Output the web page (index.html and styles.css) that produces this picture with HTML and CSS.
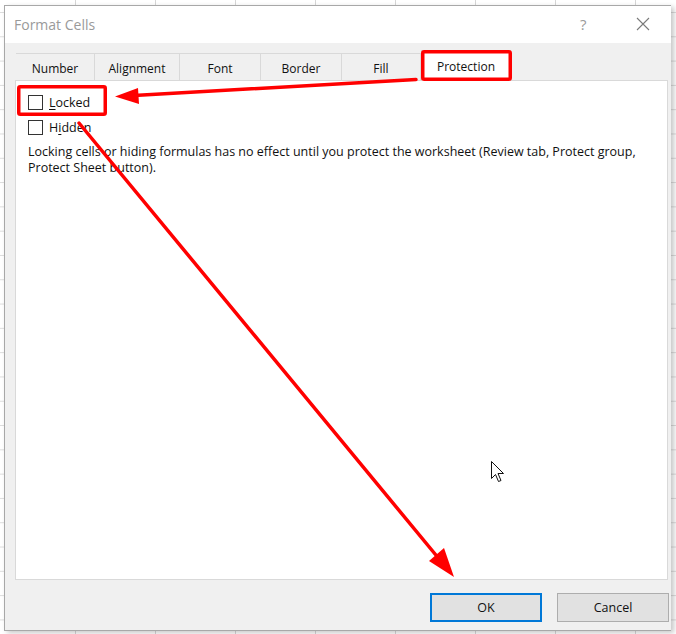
FILE: index.html
```html
<!DOCTYPE html>
<html>
<head>
<meta charset="utf-8">
<title>Format Cells</title>
<link rel="stylesheet" href="styles.css">
</head>
<body>
<div class="dialog">
  <div class="titlebar">
    <span class="title">Format Cells</span>
    <span class="help">?</span>
    <span class="close">
      <svg width="14" height="14" viewBox="0 0 14 14"><path d="M1 1 L13 13 M13 1 L1 13" stroke="#7a7a7a" stroke-width="1.1" fill="none"/></svg>
    </span>
  </div>
  <div class="body">
    <div class="tabs">
      <div class="tab">Number</div>
      <div class="tab">Alignment</div>
      <div class="tab">Font</div>
      <div class="tab">Border</div>
      <div class="tab">Fill</div>
      <div class="tab active">Protection</div>
    </div>
    <div class="panel">
      <label class="check"><span class="box"></span><span><u>L</u>ocked</span></label>
      <label class="check"><span class="box"></span><span>H<u>i</u>dden</span></label>
      <p class="note">Locking cells or hiding formulas has no effect until you protect the worksheet (Review tab, Protect group, Protect Sheet button).</p>
    </div>
    <div class="buttons">
      <button class="btn btn-default">OK</button>
      <button class="btn">Cancel</button>
    </div>
  </div>
</div>

<svg class="annot" width="676" height="634" viewBox="0 0 676 634">
  <rect x="422.75" y="51.75" width="87.5" height="27.5" rx="1.5" fill="none" stroke="#f00" stroke-width="3.5"/>
  <rect x="18.75" y="86.75" width="86.5" height="27.5" rx="1.5" fill="none" stroke="#f00" stroke-width="3.5"/>
  <line x1="416" y1="79.5" x2="134" y2="95.5" stroke="#f00" stroke-width="3.5" stroke-linecap="round"/>
  <polygon points="115,96.5 138,88 139,104" fill="#f00"/>
  <line x1="79" y1="123" x2="440" y2="560" stroke="#f00" stroke-width="3.5" stroke-linecap="round"/>
  <polygon points="454,577 429,561 444,548" fill="#f00"/>
  <path d="M491.5 461.5 L491.5 478.5 L495.5 474.5 L498.5 481.5 L501 480.5 L498 473.5 L503.5 473.5 Z" fill="#fff" stroke="#111" stroke-width="1" stroke-linejoin="miter"/>
</svg>
</body>
</html>
```

FILE: styles.css
```css
* { box-sizing: border-box; }

html, body {
  margin: 0;
  padding: 0;
}

body {
  width: 676px;
  height: 634px;
  overflow: hidden;
  position: relative;
  background-color: #ffffff;
  background-image:
    linear-gradient(to right, #d6d6d6 1px, transparent 1px),
    linear-gradient(to bottom, #dcdcdc 1px, transparent 1px);
  background-size: 80px 100%, 100% 24.3px;
  background-position: 75px 0, 0 12px;
  font-family: "Open Sans", "Noto Sans", sans-serif;
  font-size: 12px;
  color: #111111;
}

.dialog {
  margin: 5px 0 0 4px;
  width: 667px;
  height: 626px;
  border: 1px solid #a8a8a8;
  border-right: none;
  background: #f0f0f0;
  box-shadow: 3px 2px 5px rgba(0, 0, 0, 0.22);
  display: flex;
  flex-direction: column;
}

.titlebar {
  height: 37px;
  background: #ffffff;
  display: flex;
  align-items: center;
  padding-left: 9px;
}

.title {
  font-size: 14px;
  color: #9a9a9a;
  flex: 1;
  padding-bottom: 1px;
}

.help {
  font-size: 15px;
  color: #9a9a9a;
  width: 12px;
  margin-right: 44px;
  padding-bottom: 2px;
}

.close {
  width: 14px;
  height: 14px;
  margin-right: 21px;
  display: flex;
  margin-bottom: 2px;
}

.body {
  flex: 1;
  padding: 10px 0 0 10px;
  display: flex;
  flex-direction: column;
}

.tabs {
  display: grid;
  grid-template-columns: 79px 85px 81px 81px 79px 90px;
  height: 27px;
  margin-left: 1px;
}

.tab {
  border-top: 1px solid #d9d9d9;
  border-right: 1px solid #d9d9d9;
  display: flex;
  align-items: center;
  justify-content: center;
  padding-top: 2px;
}

.tab.active {
  background: #ffffff;
  border: 1px solid #d9d9d9;
  border-bottom: none;
  margin-top: -3px;
  margin-bottom: -1px;
  position: relative;
  z-index: 1;
  padding-top: 0;
}

.panel {
  width: 653px;
  height: 500px;
  background: #ffffff;
  border: 1px solid #d9d9d9;
  padding: 9px 12px 0 12px;
  font-size: 12.5px;
}

.check {
  display: flex;
  align-items: center;
  height: 25px;
  gap: 6px;
}

.box {
  width: 15px;
  height: 15px;
  border: 1px solid #333333;
  background: #ffffff;
}

.check u {
  text-decoration-thickness: 1px;
  text-underline-offset: 2px;
}

.note {
  margin: 4px 0 0 0;
  line-height: 16px;
  width: 630px;
}

.buttons {
  display: flex;
  gap: 15px;
  margin-top: 13px;
  padding-left: 415px;
}

.btn {
  width: 112px;
  height: 29px;
  background: #e1e1e1;
  border: 1px solid #adadad;
  font-family: "Open Sans", "Noto Sans", sans-serif;
  font-size: 12.5px;
  color: #111111;
  padding: 0;
}

.btn-default {
  border: 2px solid #0078d7;
}

.annot {
  position: absolute;
  left: 0;
  top: 0;
  z-index: 10;
  pointer-events: none;
}
```
